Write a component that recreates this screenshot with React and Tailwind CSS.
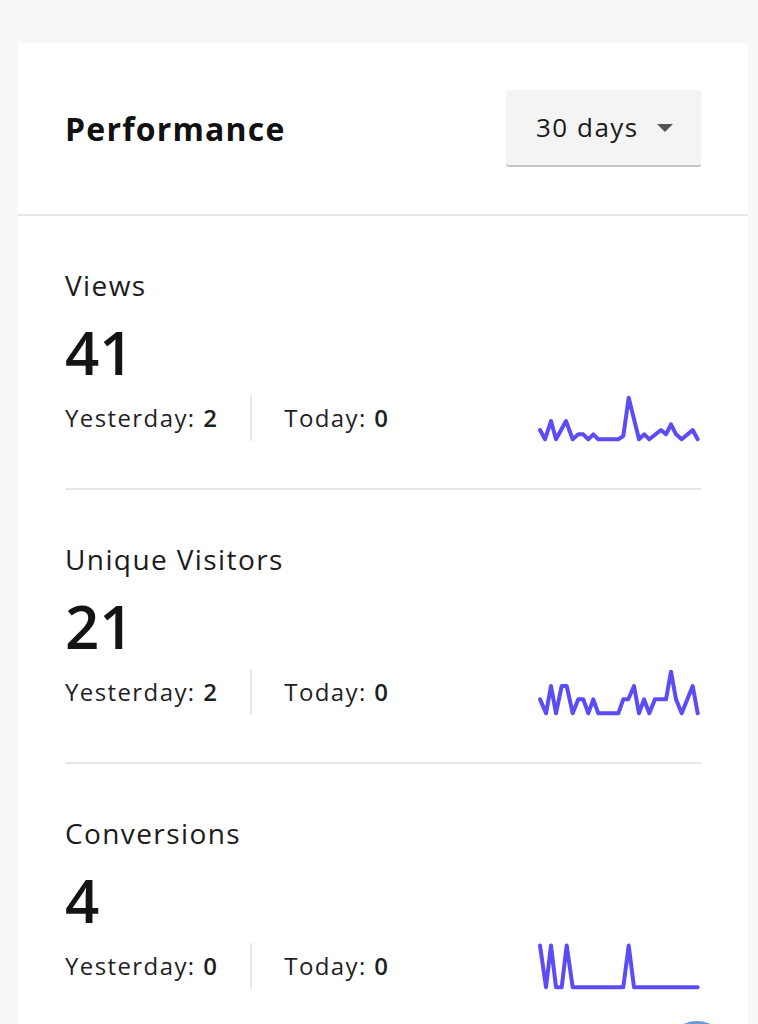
const metrics = [
  {
    label: "Views",
    total: 41,
    yesterday: 2,
    today: 0,
    points: [
      [4, 35], [9, 44.3], [15, 26], [20, 44.3], [30, 26], [36.7, 44.3], [42.3, 39.3],
      [47.3, 39.3], [52.3, 44.3], [57.3, 39.3], [62.3, 44.3], [82.3, 44.3], [87.3, 41],
      [92.7, 2.7], [103, 44.3], [108.3, 39.3], [113.3, 44.3], [125, 35], [130, 39.3],
      [135, 29.3], [140, 39.3], [145.7, 44.3], [156.7, 35], [161.7, 44.3],
    ],
  },
  {
    label: "Unique Visitors",
    total: 21,
    yesterday: 2,
    today: 0,
    points: [
      [4, 30.3], [10, 44.3], [15, 17], [20, 44.3], [25.7, 17], [30.7, 17], [36.7, 44.3],
      [42.3, 30.3], [47.3, 30.3], [52.3, 44.3], [57.3, 30.3], [62.3, 44.3], [82.3, 44.3],
      [87.3, 30.3], [92.3, 30.3], [98, 17], [103, 44.3], [108, 30.3], [113.3, 44.3],
      [119, 30.3], [130, 30.3], [135, 2.7], [140, 30.3], [145.7, 44.3], [156.7, 17],
      [161.7, 44.3],
    ],
  },
  {
    label: "Conversions",
    total: 4,
    yesterday: 0,
    today: 0,
    points: [
      [4, 2.5], [10, 44.3], [15, 2.5], [20, 44.3], [25.7, 44.3], [30.7, 2.5], [36.7, 44.3],
      [87.3, 44.3], [92.7, 2.5], [98, 44.3], [161.7, 44.3],
    ],
  },
];

function Sparkline({ points }) {
  const d = points.map((p, i) => (i === 0 ? "M" : "L") + p[0] + " " + p[1]).join(" ");
  return (
    <svg width="165" height="46" viewBox="0 0 165 46" className="ml-auto overflow-visible">
      <path d={d} fill="none" stroke="#5b4cf5" strokeWidth="4" strokeLinejoin="round" strokeLinecap="round" />
    </svg>
  );
}

function Metric({ metric, last }) {
  return (
    <div className="pt-[49px]">
      <div className="text-[28px] leading-[40px] tracking-[1.4px] text-[#1b1b1b]">{metric.label}</div>
      <div className="mt-[15px] text-[60px] leading-[64px] font-semibold text-[#141414]">{metric.total}</div>
      <div className="mt-[11px] flex items-center h-[46px] text-[24px] tracking-[1.4px] text-[#1f1f1f]">
        <span>
          Yesterday: <span className="font-semibold">{metric.yesterday}</span>
        </span>
        <div className="mx-[32px] w-[2px] h-[46px] bg-[#e8e8e8]" />
        <span>
          Today: <span className="font-semibold">{metric.today}</span>
        </span>
        <Sparkline points={metric.points} />
      </div>
      {!last && <div className="mt-[47px] h-[2px] bg-[#e6e6e6]" />}
    </div>
  );
}

export default function App() {
  return (
    <div className="relative h-[1024px] overflow-hidden bg-[#f7f8fa] pt-[43px] pl-[18px] pr-[10px]" style={{ fontFamily: '"Open Sans", "Noto Sans", sans-serif' }}>
      <div className="bg-white h-full">
        {/* header */}
        <div className="flex items-center justify-between h-[171px] px-[47px]">
          <h2 className="text-[32px] font-bold tracking-[1.2px] text-[#111]">Performance</h2>
          <button className="flex items-center h-[77px] w-[195px] pl-[30px] pr-[28px] bg-[#f4f4f4] rounded-[3px] border-b-2 border-[#c4c4c4] text-[26px] tracking-[1.5px] text-[#1b1b1b]">
            <span>30 days</span>
            <svg width="16" height="8" viewBox="0 0 16 8" className="ml-auto">
              <path d="M0 0 L16 0 L8 8 Z" fill="#555" />
            </svg>
          </button>
        </div>
        <div className="h-[2px] bg-[#e6e6e6]" />

        {/* metrics */}
        <div className="px-[47px]">
          {metrics.map((m, i) => (
            <Metric key={m.label} metric={m} last={i === metrics.length - 1} />
          ))}
        </div>
      </div>

      {/* floating button peeking at bottom */}
      <div className="absolute left-[665px] top-[1021px] w-[64px] h-[64px] rounded-full bg-[#6b9bd6]" />
    </div>
  );
}
